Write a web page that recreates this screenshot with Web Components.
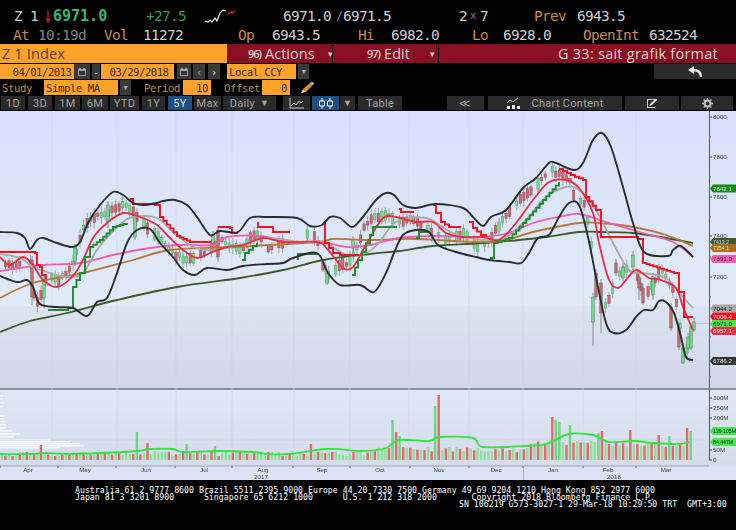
<!DOCTYPE html>
<html>
<head>
<meta charset="utf-8">
<title>Z 1 Index G</title>
<style>
  html, body { margin: 0; background: #000; }
  body { width: 736px; height: 530px; overflow: hidden; font-family: "Roboto", "Liberation Sans", sans-serif; }
</style>
</head>
<body>
<quote-header></quote-header>
<title-bar></title-bar>
<date-bar></date-bar>
<study-bar></study-bar>
<range-bar></range-bar>
<chart-panel></chart-panel>
<contact-footer></contact-footer>

<script>
// row of items placed by start column, each cell is as wide as the gap to the next one
function cells(items) {
    return items.map((it, i) => {
        const next = i + 1 < items.length ? items[i + 1][0] : 736;
        return `<span class="${it[2] || ""}" style="width:${next - it[0]}px">${it[1]}</span>`;
    }).join("");
}

class QuoteHeader extends HTMLElement {
    constructor() {
        super();
        this.root = this.attachShadow({ mode: "open" });
    }

    connectedCallback() {
        const spark = `<svg width="32" height="16" viewBox="0 0 32 16"><path d="M1 13l3 1 2-2 2 2 3-4 2 3 3-8 3-3 3 1" fill="none" stroke="#eee" stroke-width="1.2"/><path d="M24 6l3-2 1 1 3-2" fill="none" stroke="#e8222c" stroke-width="1.4"/></svg>`;
        const arrow = `<svg width="8" height="14" viewBox="0 0 8 14"><path d="M4 1v11M2 9l2 4 2-4" fill="none" stroke="#c8222c" stroke-width="1.2"/></svg>`;
        const first = [
            [0, "", ""], [14, "Z 1", "w"], [44, arrow, ""], [53, "6971.0", "big"], [146, "+27.5", "g"],
            [204, spark, ""], [283, "6971.0", "w"], [336, "/", "d sl"], [343, "6971.5", "w"],
            [459, "2", "w"], [470, "x", "d sm"], [480, "7", "w"], [534, "Prev", "o"], [577, "6943.5", "w"]
        ];
        const second = [
            [0, "", ""], [13, "At", "o"], [38, "10:19d", "d"], [104, "Vol", "o"], [143, "11272", "w"],
            [238, "Op", "o"], [272, "6943.5", "w"], [358, "Hi", "o"], [391, "6982.0", "w"],
            [472, "Lo", "o"], [503, "6928.0", "w"], [583, "OpenInt", "o"], [649, "632524", "w"]
        ];
        this.root.innerHTML = `
          <style>
            :host { display: block; padding-top: 6px; font: 14.4px "DejaVu Sans Mono", monospace; letter-spacing: -0.66px; }
            .row { display: flex; height: 19px; align-items: center; white-space: pre; }
            span { display: flex; align-items: center; flex: none; }
            .w { color: #cfcfcf; }
            .d { color: #808080; }
            .sm { font-size: 11px; }
            .sl { font-size: 11.5px; }
            .o { color: #c98a45; }
            .g { color: #2f9d55; }
            .big { color: #35b56c; font-weight: bold; font-size: 15px; letter-spacing: 0; }
          </style>
          <div class="row">${cells(first)}</div>
          <div class="row">${cells(second)}</div>
        `;
    }
}

class TitleBar extends HTMLElement {
    constructor() {
        super();
        this.root = this.attachShadow({ mode: "open" });
        this.root.innerHTML = `
          <style>
            :host { display: flex; height: 19px; font: 14.5px "Open Sans", sans-serif; color: #e0d0d0; }
            div { display: flex; align-items: center; box-sizing: border-box; flex: none; }
            .sec { background: #ffa22c; color: #5a4526; width: 227px; padding-left: 2px; letter-spacing: .15px; }
            .act { background: #8a0f22; width: 105px; margin-right: 1px; padding-left: 21px; gap: 13px; }
            .act.e { padding-left: 34px; }
            .act i { font-style: normal; font-size: 9px; color: #ddd; margin-left: auto; padding-right: 3px; }
            .act b { font-weight: 600; font-size: 11px; letter-spacing: -1px; margin-right: -9px; }
            .tag { background: #8a0f22; flex: 1; justify-content: flex-end; padding-right: 18px; letter-spacing: .25px; }
          </style>
          <div class="sec">Z 1 Index</div>
          <div class="act"><b>96)</b> Actions <i>▾</i></div>
          <div class="act e"><b>97)</b> Edit <i>▾</i></div>
          <div class="tag">G 33: sait grafik format</div>
        `;
    }
}

class DateBar extends HTMLElement {
    constructor() {
        super();
        this.root = this.attachShadow({ mode: "open" });
        const cal = `<svg width="10" height="10" viewBox="0 0 10 10"><path d="M1 2h8v7H1z" fill="#9a9a9a"/><path d="M2 4h6v4H2z" fill="#333"/><path d="M3 1v2M7 1v2" stroke="#ddd"/></svg>`;
        this.root.innerHTML = `
          <style>
            :host { display: flex; height: 15px; margin-top: 1px; font: 10.6px "DejaVu Sans Mono", monospace; color: #3a2a10; letter-spacing: -.5px; }
            div { display: flex; align-items: center; justify-content: center; flex: none; box-sizing: border-box; }
            .o { background: #ffa22c; }
            .b { background: #3a3a3a; color: #aaa; }
            .r { margin-left: auto; width: 82px; background: #2b2b2b; }
          </style>
          <div class="o" style="width:74px;padding-left:10px">04/01/2013</div>
          <div class="b" style="width:16px">${cal}</div>
          <div class="b" style="width:8px;margin-left:2px;color:#ddd">-</div>
          <div class="o" style="width:73px;margin-left:1px;padding-left:3px">03/29/2018</div>
          <div class="b" style="width:14px;margin-left:3px">${cal}</div>
          <div class="b" style="width:12px;margin-left:2px;">‹</div>
          <div class="b" style="width:12px;margin-left:3px;color:#ddd">›</div>
          <div class="o" style="width:69px;margin-left:7px;justify-content:flex-start;padding-left:2px">Local CCY</div>
          <div class="b" style="width:11px;margin-left:2px;font-size:7px">▼</div>
          <div class="r"><svg width="16" height="13" viewBox="0 0 16 13"><path d="M14 12c0-5-3-7-8-7" fill="none" stroke="#eee" stroke-width="2.4"/><path d="M7 1L1 5l6 4z" fill="#eee"/></svg></div>
        `;
    }
}

class StudyBar extends HTMLElement {
    constructor() {
        super();
        this.root = this.attachShadow({ mode: "open" });
        this.root.innerHTML = `
          <style>
            :host { display: flex; height: 15px; margin-top: 1px; font: 10.6px "DejaVu Sans Mono", monospace; letter-spacing: -.4px; align-items: stretch; }
            div { display: flex; align-items: center; flex: none; box-sizing: border-box; }
            .t { color: #c98a45; }
            .o { background: #ffa22c; color: #3a2a10; padding: 0 3px; }
          </style>
          <div class="t" style="width:44px;padding-left:2px">Study</div>
          <div class="o" style="width:74px;padding-left:2px">Simple MA</div>
          <div style="width:11px;margin-left:2px;background:#3a3a3a;color:#aaa;font-size:7px;justify-content:center">▼</div>
          <div class="t" style="width:39px;margin-left:13px">Period</div>
          <div class="o" style="width:28px;justify-content:flex-end">10</div>
          <div class="t" style="width:38px;margin-left:13px">Offset</div>
          <div class="o" style="width:28px;justify-content:flex-end">0</div>
          <div style="margin-left:9px"><svg width="16" height="14" viewBox="0 0 16 14"><path d="M2 12l2-4 7-6 3 2-7 7z" fill="#d98a3a"/><path d="M11 2l3 2 1-2-2-1z" fill="#e8c9a0"/><path d="M2 12l2-3 2 2z" fill="#f3e3c8"/></svg></div>
        `;
    }
}

// one button of the range bar, the label or icon comes in by the slot
class RangeButton extends HTMLElement {
    constructor() {
        super();
        this.root = this.attachShadow({ mode: "open" });
        this.root.innerHTML = `
          <style>
            :host { display: flex; align-items: center; justify-content: center; flex: none; box-sizing: border-box; height: 14px; background: #2a2a2a; color: #a3a3a3; gap: 5px; }
            :host([on]) { background: #1d4f80; color: #d8e4f0; }
          </style>
          <slot></slot>
        `;
    }
}

class RangeBar extends HTMLElement {
    constructor() {
        super();
        this.root = this.attachShadow({ mode: "open" });
        const b = (x, w, inner, on) => `<range-button style="width:${w}px;margin-left:${x}px"${on ? " on" : ""}>${inner}</range-button>`;
        const line = `<svg width="15" height="11" viewBox="0 0 15 11"><path d="M1 0v10h14" fill="none" stroke="#ccc"/><path d="M2 8l3-3 2 2 3-4 2 2 2-2" fill="none" stroke="#ccc"/></svg>`;
        const candle = `<svg width="16" height="11" viewBox="0 0 16 11"><path d="M4 0v11M12 0v11" stroke="#fff"/><path d="M1.5 3h5v5h-5zM9.5 3h5v5h-5z" fill="#1d4f80" stroke="#fff"/></svg>`;
        const content = `<svg width="14" height="12" viewBox="0 0 14 12"><path d="M1 6l3-3 3 2 5-4" fill="none" stroke="#ccc"/><path d="M1 9h3v3H1zM6 8h3v4H6zM11 9h3v3h-3z" fill="#eee"/></svg>`;
        const edit = `<svg width="12" height="11" viewBox="0 0 12 11"><path d="M1 1h10v1H1zM1 1h1v9H1zM1 9h8v1H1z" fill="#ccc"/><path d="M3 8l2-3 5-4 1 1-5 5z" fill="#eee"/></svg>`;
        const gear = `<svg width="11" height="11" viewBox="0 0 11 11"><circle cx="5.5" cy="5.5" r="3" fill="none" stroke="#bbb" stroke-width="2"/><path d="M5.5 0v2M5.5 9v2M0 5.5h2M9 5.5h2M1.6 1.6L3 3M8 8l1.4 1.4M1.6 9.4L3 8M8 3l1.4-1.4" stroke="#bbb" stroke-width="1.4"/></svg>`;
        this.root.innerHTML = `
          <style>
            :host { display: flex; height: 14px; margin-top: 1px; font: 11px "Roboto", sans-serif; letter-spacing: .3px; }
            .arr { font-size: 9px; }
          </style>
          ${b(1, 24, "1D")}${b(3, 24, "3D")}${b(3, 25, "1M")}${b(2, 26, "6M")}${b(2, 29, "YTD")}
          ${b(3, 23, "1Y")}${b(3, 24, "5Y", true)}${b(2, 27, "Max")}
          ${b(2, 53, 'Daily <span class="arr">▼</span>')}${b(7, 27, line)}${b(2, 27, candle, true)}
          ${b(1, 15, '<span class="arr">▼</span>')}${b(3, 44, "Table")}
          ${b(45, 37, "≪")}${b(4, 134, content + "&nbsp; Chart Content")}
          ${b(3, 54, edit)}${b(2, 52, gear)}
        `;
    }
}

class ChartPanel extends HTMLElement {
    constructor() {
        super();
        this.root = this.attachShadow({ mode: "open" });
    }

    connectedCallback() {
        this.root.innerHTML = `
          <style>
            :host { display: block; height: 369px; margin-top: 1px; background: #dfe7f7; }
            svg { display: block; filter: blur(.4px); }
            text { font: 6.2px "Liberation Sans", sans-serif; fill: #444; }
            text.tiny { font-size: 5.2px; }
          </style>
          <svg width="736" height="369" viewBox="0 111 736 369">${this.draw()}</svg>
        `;
    }

    // smooth path through the traced points
    smooth(p) {
        let d = `M${p[0][0]} ${p[0][1]}`;
        for (let i = 0; i < p.length - 1; i++) {
            const a = p[i - 1] || p[i], b = p[i], c = p[i + 1], e = p[i + 2] || c;
            d += `C${(b[0] + (c[0] - a[0]) / 6).toFixed(1)} ${(b[1] + (c[1] - a[1]) / 6).toFixed(1)} ${(c[0] - (e[0] - b[0]) / 6).toFixed(1)} ${(c[1] - (e[1] - b[1]) / 6).toFixed(1)} ${c[0]} ${c[1]}`;
        }
        return d;
    }

    // staircase through the traced points, one step every 3.5px
    stair(p) {
        let d = `M${p[0][0]} ${p[0][1]}`;
        for (let i = 0; i < p.length - 1; i++) {
            const a = p[i], b = p[i + 1];
            const n = Math.max(1, Math.round((b[0] - a[0]) / 3.5));
            const flat = Math.abs(b[1] - a[1]) < 3;
            if (flat) { d += `H${b[0]}V${b[1]}`; continue; }
            for (let k = 1; k <= n; k++) {
                d += `H${(a[0] + (b[0] - a[0]) * k / n).toFixed(1)}V${(a[1] + (b[1] - a[1]) * k / n).toFixed(1)}`;
            }
        }
        return d;
    }

    interp(p, x) {
        for (let i = 0; i < p.length - 1; i++) {
            if (x <= p[i + 1][0]) {
                const t = (x - p[i][0]) / (p[i + 1][0] - p[i][0]);
                return p[i][1] + (p[i + 1][1] - p[i][1]) * t;
            }
        }
        return p[p.length - 1][1];
    }

    draw() {
        let seed = 11;
        const rnd = () => (seed = (seed * 16807) % 2147483647) / 2147483647;
        let out = `<defs>
          <linearGradient id="top" x1="0" y1="0" x2="0" y2="1"><stop offset="0" stop-color="#d8e1fb"/><stop offset="1" stop-color="#e1ebf7"/></linearGradient>
          <linearGradient id="low" x1="0" y1="0" x2="0" y2="1"><stop offset="0" stop-color="#dde4f0"/><stop offset="1" stop-color="#d1d6ea"/></linearGradient>
          <linearGradient id="vol" x1="0" y1="0" x2="0" y2="1"><stop offset="0" stop-color="#e0e7f7"/><stop offset="1" stop-color="#d4dcec"/></linearGradient>
        </defs>
        <rect x="0" y="111" width="736" height="195" fill="url(#top)"/>
        <rect x="0" y="306" width="736" height="82" fill="url(#low)"/>
        <rect x="0" y="388" width="736" height="2" fill="#8f959f"/>
        <rect x="0" y="390" width="736" height="76" fill="url(#vol)"/>
        <rect x="0" y="466" width="736" height="14" fill="#d9e4f6"/>
        <rect x="0" y="465.5" width="709" height="1" fill="#9aa2ad"/>`;

        // grid
        [52, 117, 176, 232, 294, 350, 409, 469, 523, 583, 636].forEach(x => {
            out += `<path d="M${x} 111V466" stroke="#ccd5e6" stroke-width=".6"/>`;
        });

        // candles
        const price = [[0, 262], [12, 266], [22, 264], [31, 262], [33, 290], [38, 302], [45, 282], [50, 275], [60, 280], [70, 270], [75, 255], [85, 225], [100, 215], [115, 210], [125, 205], [135, 215], [145, 225], [155, 235], [165, 245], [175, 255], [190, 260], [197, 255], [210, 250], [220, 240], [240, 250], [255, 235], [270, 250], [285, 240], [300, 235], [315, 235], [322, 250], [327, 278], [335, 268], [345, 265], [355, 255], [365, 225], [380, 215], [400, 220], [415, 220], [430, 230], [445, 240], [465, 235], [480, 250], [490, 240], [505, 215], [525, 195], [540, 180], [550, 170], [570, 180], [575, 200], [585, 205], [592, 250], [594, 300], [597, 290], [601, 290], [604, 308], [610, 298], [618, 275], [625, 268], [632, 265], [640, 285], [647, 292], [655, 280], [660, 270], [672, 285], [676, 300], [680, 325], [684, 358], [688, 345], [691, 335], [693, 322]];
        for (let x = 2; x < 694; x += 3.55) {
            if (rnd() < .22) continue;
            const c = this.interp(price, x);
            const up = rnd() > 0.5;
            const h = 3 + rnd() * 8;
            const top = c - h / 2 + (rnd() - .5) * 4;
            const wick = 2 + rnd() * 4;
            const fill = up ? "#72d987" : "#c8686e";
            const edge = up ? "#3f9a58" : "#8a4048";
            out += `<path d="M${x.toFixed(1)} ${(top - wick).toFixed(1)}V${(top + h + wick).toFixed(1)}" stroke="#6a7a74" stroke-width=".6"/>`;
            out += `<rect x="${(x - 1.2).toFixed(1)}" y="${top.toFixed(1)}" width="2.4" height="${h.toFixed(1)}" fill="${fill}" stroke="${edge}" stroke-width=".4"/>`;
        }
        // the long ones that stand out, read off the reference: x, body top, body bottom, colour, wick end
        const G = "#72d987", R = "#c8686e";
        [[32, 260, 297, R, 305], [44, 280, 298, G, 308], [75, 248, 262, G, 266], [108, 205, 222, G, 228], [135, 217, 237, G, 240],
         [213, 235, 243, G, 246], [218, 230, 257, R, 262], [323, 263, 270, R, 272], [327, 273, 283, G, 285], [353, 240, 248, G, 252],
         [593, 297, 322, G, 346], [596, 273, 297, R, 300], [601, 283, 313, R, 333], [616, 263, 273, R, 276], [623, 267, 278, G, 281],
         [633, 255, 267, G, 270], [639, 277, 288, R, 300], [643, 288, 303, R, 305], [653, 277, 295, G, 300], [671, 307, 328, R, 331],
         [679, 328, 347, R, 350], [683, 348, 363, G, 364], [688, 337, 348, G, 350], [691, 327, 348, G, 350], [694, 322, 330, G, 332]].forEach(c => {
            out += `<path d="M${c[0]} ${c[1] - 4}V${c[4]}" stroke="#5a6a64" stroke-width=".7"/><rect x="${c[0] - 1.3}" y="${c[1]}" width="2.6" height="${c[2] - c[1]}" fill="${c[3]}" stroke="#4a6050" stroke-width=".4"/>`;
        });

        // moving averages and bands
        const smoothLine = (p, color, w) => `<path d="${this.smooth(p)}" fill="none" stroke="${color}" stroke-width="${w}" stroke-linejoin="round"/>`;
        const stairLine = (p, color) => `<path d="${this.stair(p)}" fill="none" stroke="${color}" stroke-width="1.9"/>`;

        out += smoothLine([[0, 332], [30, 321], [67, 313], [117, 300], [177, 287], [240, 278], [283, 270], [323, 260], [370, 254], [399, 251], [433, 246], [483, 243], [539, 238], [579, 232], [599, 232], [633, 233], [666, 238], [693, 243]], "#3c5a28", 1.8);
        out += smoothLine([[0, 298], [33, 283], [83, 273], [133, 260], [170, 250], [233, 247], [317, 242], [333, 239], [370, 240], [416, 239], [493, 242], [533, 232], [579, 223], [599, 223], [633, 227], [666, 235], [693, 246]], "#b8773a", 1.8);
        out += smoothLine([[0, 271], [20, 268], [43, 265], [80, 263], [113, 255], [150, 248], [180, 245], [213, 245], [227, 237], [260, 236], [287, 242], [320, 242], [347, 247], [370, 245], [399, 238], [433, 236], [479, 237], [509, 233], [533, 223], [559, 217], [579, 214], [606, 222], [643, 233], [673, 242], [693, 257]], "#ee5fb0", 1.8);
        out += smoothLine([[0, 254], [20, 258], [33, 267], [50, 273], [67, 277], [83, 273], [97, 250], [117, 227], [133, 217], [157, 218], [173, 232], [193, 247], [213, 250], [240, 245], [267, 238], [300, 242], [323, 242], [347, 255], [366, 253], [379, 243], [396, 222], [426, 218], [453, 233], [483, 240], [506, 237], [526, 220], [546, 197], [566, 187], [579, 190], [596, 210], [613, 243], [629, 270], [643, 273], [666, 278], [683, 297], [693, 308]], "#a9a9a9", 1.8);
        out += smoothLine([[0, 257], [10, 265], [23, 257], [33, 265], [43, 280], [57, 287], [72, 277], [83, 260], [93, 238], [107, 223], [123, 213], [140, 217], [157, 225], [170, 238], [183, 250], [197, 258], [210, 253], [227, 247], [243, 245], [263, 238], [283, 242], [317, 242], [328, 250], [343, 268], [353, 267], [363, 250], [370, 238], [383, 218], [396, 217], [416, 222], [433, 222], [446, 233], [463, 237], [483, 237], [499, 240], [516, 223], [533, 200], [549, 182], [566, 180], [579, 188], [593, 213], [599, 243], [609, 280], [618, 288], [626, 280], [636, 270], [649, 278], [661, 280], [676, 288], [683, 307], [693, 330]], "#ee2b45", 1.8);

        [[[48, 310], [68, 308], [73, 287], [80, 273], [85, 257], [90, 247], [100, 240], [113, 227], [127, 223]],
         [[242, 260], [245, 253], [257, 243]],
         [[297, 259], [298, 254], [318, 253]],
         [[352, 275], [358, 260], [370, 235], [373, 227], [396, 226]],
         [[416, 238], [419, 232], [429, 231]],
         [[490, 258], [494, 243], [509, 238], [523, 223], [543, 200], [559, 182]]].forEach(s => { out += stairLine(s, "#1c8f2c"); });

        [[[0, 252], [35, 253], [37, 265], [40, 267], [42, 275], [46, 279]],
         [[130, 199], [133, 204], [155, 205], [160, 217], [177, 236], [190, 242], [210, 243]],
         [[218, 227], [230, 228], [232, 233], [238, 233]],
         [[257, 223], [258, 227], [272, 227], [273, 232], [290, 232]],
         [[323, 223], [325, 243], [333, 253], [340, 255], [358, 256]],
         [[399, 209], [401, 212], [413, 213]],
         [[433, 205], [436, 213], [441, 222], [449, 227], [461, 227]],
         [[469, 222], [473, 228], [481, 235], [486, 236]],
         [[559, 169], [571, 175], [583, 180], [586, 197], [596, 210], [601, 237], [638, 239], [643, 263], [674, 273], [679, 292], [684, 317], [693, 317]]].forEach(s => { out += stairLine(s, "#f01222"); });

        out += smoothLine([[0, 232], [17, 233], [25, 238], [30, 249], [37, 240], [43, 238], [57, 243], [72, 247], [80, 242], [88, 223], [100, 205], [113, 192], [123, 195], [133, 203], [143, 205], [157, 203], [163, 201], [175, 200], [187, 205], [197, 217], [210, 235], [220, 231], [238, 232], [250, 218], [267, 217], [297, 218], [310, 226], [322, 225], [330, 217], [340, 218], [352, 227], [362, 218], [376, 200], [386, 193], [394, 195], [403, 205], [416, 208], [436, 204], [463, 208], [473, 217], [483, 226], [491, 217], [506, 210], [523, 188], [536, 178], [549, 163], [556, 163], [574, 170], [583, 163], [593, 140], [602, 133], [611, 147], [623, 187], [633, 223], [644, 252], [668, 256], [673, 250], [681, 246], [693, 257]], "#2a2d30", 1.9);
        out += smoothLine([[0, 276], [17, 282], [27, 280], [33, 287], [40, 304], [57, 307], [73, 308], [87, 316], [97, 302], [107, 298], [117, 273], [127, 243], [137, 230], [150, 229], [160, 243], [173, 257], [183, 270], [195, 275], [207, 268], [227, 270], [243, 266], [267, 264], [283, 263], [293, 258], [317, 253], [328, 273], [340, 285], [360, 285], [374, 292], [386, 273], [394, 253], [403, 235], [416, 230], [429, 232], [438, 245], [456, 252], [476, 257], [489, 260], [509, 262], [521, 263], [529, 253], [538, 238], [549, 235], [559, 217], [569, 203], [579, 205], [588, 237], [596, 277], [606, 323], [614, 333], [626, 330], [636, 317], [644, 310], [653, 310], [659, 301], [666, 302], [674, 313], [681, 337], [686, 357], [693, 360]], "#2a2d30", 1.9);

        // right axis
        out += `<path d="M709.5 111V460" stroke="#5c6370" stroke-width="1.1"/><path d="M694 323.5H709" stroke="#aab" stroke-width=".5"/>`;
        [[8000, 117], [7800, 157], [7600, 197], [7400, 236], [7200, 277]].forEach(t => {
            out += `<path d="M709 ${t[1]}h3" stroke="#444"/><text x="713" y="${t[1] + 2.3}">${t[0]}</text>`;
        });
        [137, 177, 217, 257, 297, 337, 377].forEach(y => { out += `<path d="M709 ${y}h2" stroke="#777"/>`; });

        // last value tags
        const tag = (y, v, bg, fg, tiny) => `<path d="M710 ${y}l3-4H736V${y + 4}H713z" fill="${bg}"/><text${tiny ? ' class="tiny"' : ""} x="713" y="${y + 2.2}" style="fill:${fg}">${v}</text>`;
        out += tag(242, "7413.2", "#3c5a28", "#cde", true);
        out += tag(248, "7354.1", "#a8701e", "#f3dca8", true);
        out += tag(259, "7391.9", "#ee5fb0", "#5a1040");
        out += tag(188.5, "7642.1", "#128a12", "#d8ffd8");
        out += tag(308.5, "7044.2", "#a9a9a9", "#222");
        out += tag(316.5, "7006.4", "#f01222", "#ffe0e0");
        out += tag(324, "6971.0", "#45e845", "#124");
        out += tag(331, "6957.1", "#ee2b45", "#ffe0e0");
        out += tag(361, "6786.2", "#333", "#ddd");

        // volume profile on the left edge
        [[395, 3], [398, 3], [402, 4], [406, 3], [415, 4], [418, 4], [421, 5], [424, 6], [427, 6], [430, 12], [433, 20], [436, 14], [439, 50], [441, 70], [443, 80], [445, 84], [447, 60]].forEach(r => {
            out += `<rect x="0" y="${r[0]}" width="${r[1]}" height="1.6" fill="#f4f6fc"/>`;
        });
        out += `<path d="M0 440H709" stroke="#c9d2e2" stroke-width=".5"/>`;

        // volume bars
        const spikes = { 138: 432, 148: 443, 41: 445, 186: 444, 215: 446, 310: 444, 391: 420, 394: 421, 397: 432, 401: 436, 434: 406, 437: 395, 439: 430, 553: 417, 556: 420, 559: 422, 561: 415, 569: 425, 598: 433, 601: 431, 632: 430, 660: 435, 669: 436, 687: 428, 690: 431 };
        const keys = Object.keys(spikes).map(Number);
        for (let x = 2, i = 0; x < 692; x += 3.55, i++) {
            const red = i % 2 === 1 && rnd() > .15;
            let base = x < 370 ? 451 : (x < 530 ? 447 : 442);
            if (x > 395 && x < 430) base = 446;
            if (x > 530 && x < 620) base = 441;
            let top = base + rnd() * 5;
            const near = keys.find(k => Math.abs(k - x) < 1.8);
            if (near) top = spikes[near];
            out += `<rect x="${(x - 1.2).toFixed(1)}" y="${top.toFixed(1)}" width="2.4" height="${(460 - top).toFixed(1)}" fill="${near && !red ? "#6fd67e" : red ? "#e8656f" : "#8ce398"}"/>`;
        }
        out += smoothLine([[0, 454], [33, 454], [43, 453], [67, 454], [100, 453], [137, 451], [150, 449], [173, 449], [183, 452], [217, 451], [253, 452], [267, 454], [290, 454], [327, 449], [363, 451], [386, 448], [399, 440], [429, 441], [439, 437], [473, 438], [483, 447], [526, 446], [546, 444], [569, 434], [593, 435], [609, 442], [633, 441], [653, 443], [679, 444], [689, 442]], "#2ee63c", 1.8);

        [["300M", 398], ["250M", 408], ["200M", 418], ["50M", 450], ["0", 460]].forEach(t => {
            out += `<path d="M709 ${t[1]}h3" stroke="#444"/><text x="713" y="${t[1] + 2.3}">${t[0]}</text>`;
        });
        out += tag(431, "139.105M", "#45e845", "#124", true);
        out += tag(442, "84.447M", "#45e845", "#124", true);

        // month axis
        [["Apr", 28], ["May", 85], ["Jun", 146], ["Jul", 204], ["Aug", 263], ["Sep", 322], ["Oct", 380], ["Nov", 439], ["Dec", 496], ["Jan", 553], ["Feb", 608], ["Mar", 666]].forEach(m => {
            out += `<text x="${m[1]}" y="472" text-anchor="middle">${m[0]}</text>`;
        });
        [0, 58, 116, 175, 232, 293, 350, 410, 469, 523, 583, 636].forEach(x => {
            out += `<path d="M${x} 466v2" stroke="#667"/>`;
        });
        out += `<path d="M523.5 466V480" stroke="#9aa2ad" stroke-width=".7"/>`;
        out += `<text x="261" y="479" text-anchor="middle">2017</text><text x="614" y="479" text-anchor="middle">2018</text>`;
        return out;
    }
}

class ContactFooter extends HTMLElement {
    constructor() {
        super();
        this.root = this.attachShadow({ mode: "open" });
        this.root.innerHTML = `
          <style>
            :host { display: block; height: 50px; box-sizing: border-box; padding: 7px 0 0 75px; color: #fff; font: 8.24px/7px "DejaVu Sans Mono", monospace; }
            div { height: 7px; white-space: pre; }
          </style>
          <div>Australia 61 2 9777 8600 Brazil 5511 2395 9000 Europe 44 20 7330 7500 Germany 49 69 9204 1210 Hong Kong 852 2977 6000</div>
          <div>Japan 81 3 3201 8900      Singapore 65 6212 1000      U.S. 1 212 318 2000       Copyright 2018 Bloomberg Finance L.P.</div>
          <div style="padding-left:384px">SN 106219 G573-3027-1 29-Mar-18 10:29:50 TRT  GMT+3:00</div>
        `;
    }
}

customElements.define("quote-header", QuoteHeader);
customElements.define("title-bar", TitleBar);
customElements.define("date-bar", DateBar);
customElements.define("study-bar", StudyBar);
customElements.define("range-button", RangeButton);
customElements.define("range-bar", RangeBar);
customElements.define("chart-panel", ChartPanel);
customElements.define("contact-footer", ContactFooter);
</script>
</body>
</html>
